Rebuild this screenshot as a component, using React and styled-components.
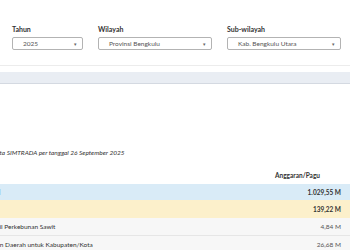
import React from 'react';
import styled, { createGlobalStyle } from 'styled-components';

const Global = createGlobalStyle`
  html, body { margin: 0; padding: 0; background: #fff; overflow: hidden; }
  body { font-family: Lato, "Noto Sans", sans-serif; color: #333; }
`;

const FilterCard = styled.section`
  height: 66px;
  box-sizing: border-box;
  border-bottom: 1px solid #ececec;
  padding: 25px 0 0 12px;
  display: flex;
  gap: 15px;
  align-items: flex-start;
`;

const Field = styled.div`
  display: flex;
  flex-direction: column;
  gap: 3px;
  width: ${(p) => p.$w}px;
  flex: none;
`;

const FieldLabel = styled.span`
  font-size: 7px;
  font-weight: 700;
  line-height: 9px;
  color: #333;
`;

const Select = styled.div`
  height: 13px;
  box-sizing: border-box;
  border: 1px solid #b3b3b3;
  border-radius: 2px;
  display: flex;
  align-items: center;
  justify-content: space-between;
  padding: 0 5px 0 10px;
  font-size: 6.5px;
  color: #555;
`;

const Caret = styled.span`
  font-size: 5px;
  color: #666;
`;

const GrayBand = styled.div`
  margin-top: 6px;
  height: 11px;
  background: #e9edf3;
  border-bottom: 1px solid #d4d9e1;
`;

const Main = styled.main`
  padding-top: 64px;
  overflow: hidden;
`;

const Inner = styled.div`
  margin-left: -76px;
  width: 522px;
`;

const Note = styled.p`
  margin: 0 0 9px;
  padding-left: 44px;
  font-size: 6.5px;
  line-height: 10px;
  font-style: italic;
  color: #333;
`;

const Row = styled.div`
  display: grid;
  grid-template-columns: 324px 99px 99px;
  align-items: center;
  height: ${(p) => p.$h}px;
  box-sizing: border-box;
  background: ${(p) => p.$bg || '#fff'};
  border-bottom: ${(p) => (p.$line ? '1px solid #e6e6e6' : 'none')};
  font-size: 6.5px;
  font-weight: ${(p) => (p.$bold ? 700 : 400)};
  color: #333;
`;

const Label = styled.span`
  padding-left: ${(p) => p.$indent}px;
  white-space: nowrap;
  overflow: hidden;
`;

const HeadCell = styled.span`
  text-align: center;
  font-weight: 700;
  color: ${(p) => p.$color || '#333'};
  white-space: nowrap;
`;

const Num = styled.span`
  text-align: right;
  padding-right: 6px;
  color: ${(p) => (p.$muted ? '#555' : '#333')};
`;

const rows = [
  { label: 'DANA TRANSFER UMUM', value: '1.029,55 M', real: '812,40 M', bg: '#d9ebf7', bold: true, h: 16, indent: 0 },
  { label: 'Dana Bagi Hasil', value: '139,22 M', real: '98,17 M', bg: '#fcf0cb', bold: true, h: 18, indent: 8 },
  { label: 'Dana Bagi Hasil Perkebunan Sawit', value: '4,84 M', real: '2,42 M', bg: '#f7f7f7', h: 18, indent: 34, line: true },
  { label: 'Dana Tambahan Daerah untuk Kabupaten/Kota', value: '26,68 M', real: '13,34 M', bg: '#f7f7f7', h: 18, indent: 34, line: true },
];

export default function App() {
  return (
    <>
      <Global />
      <FilterCard>
        <Field $w={71}>
          <FieldLabel>Tahun</FieldLabel>
          <Select>2025<Caret>▾</Caret></Select>
        </Field>
        <Field $w={114}>
          <FieldLabel>Wilayah</FieldLabel>
          <Select>Provinsi Bengkulu<Caret>▾</Caret></Select>
        </Field>
        <Field $w={114}>
          <FieldLabel>Sub-wilayah</FieldLabel>
          <Select>Kab. Bengkulu Utara<Caret>▾</Caret></Select>
        </Field>
      </FilterCard>
      <GrayBand />
      <Main>
        <Inner>
          <Note>Sumber: Data SIMTRADA per tanggal 26 September 2025</Note>
          <Row $h={17}>
            <span />
            <HeadCell>Anggaran/Pagu</HeadCell>
            <HeadCell $color="#f0a04b">Realisasi</HeadCell>
          </Row>
          {rows.map((r) => (
            <Row key={r.label} $h={r.h} $bg={r.bg} $bold={r.bold} $line={r.line}>
              <Label $indent={r.indent}>{r.label}</Label>
              <Num $muted={!r.bold}>{r.value}</Num>
              <Num $muted={!r.bold}>{r.real}</Num>
            </Row>
          ))}
        </Inner>
      </Main>
    </>
  );
}
